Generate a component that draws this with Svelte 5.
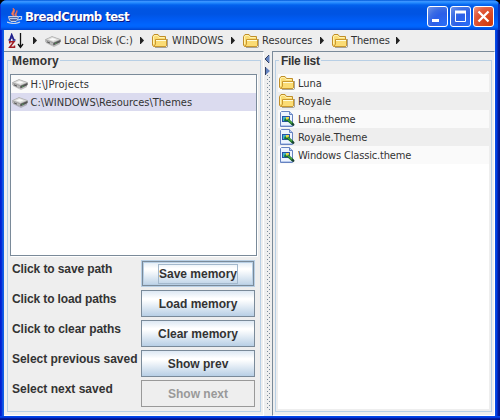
<script>
  const crumbs = [
    { label: 'Local Disk (C:)', kind: 'disk', width: 107, gap: 3, tracking: -0.16 },
    { label: 'WINDOWS', kind: 'folder', width: 91, gap: 4, tracking: 0 },
    { label: 'Resources', kind: 'folder', width: 89, gap: 3, tracking: 0 },
    { label: 'Themes', kind: 'folder', width: 76, gap: 3, tracking: -0.1 }
  ];
  const memory = [
    { path: 'H:\\JProjects', tracking: 0.22 },
    { path: 'C:\\WINDOWS\\Resources\\Themes', tracking: 0 }
  ];
  const files = [
    { name: 'Luna', kind: 'folder', tracking: 0 },
    { name: 'Royale', kind: 'folder', tracking: 0 },
    { name: 'Luna.theme', kind: 'theme', tracking: -0.15 },
    { name: 'Royale.Theme', kind: 'theme', tracking: -0.1 },
    { name: 'Windows Classic.theme', kind: 'theme', tracking: -0.17 }
  ];
  const actions = [
    { text: 'Click to save path', button: 'Save memory', focused: true, tracking: -0.1 },
    { text: 'Click to load paths', button: 'Load memory', tracking: -0.12 },
    { text: 'Click to clear paths', button: 'Clear memory', tracking: -0.06 },
    { text: 'Select previous saved', button: 'Show prev', tracking: -0.03 },
    { text: 'Select next saved', button: 'Show next', disabled: true, tracking: 0 }
  ];
</script>

{#snippet icon(kind)}
  <svg class="icon" width="16" height="16" viewBox="0 0 16 16">
    {#if kind === 'folder'}
      <path d="M3 14.5H14.5Q15.5 14.5 15.5 13V6" fill="none" stroke="#8f8a78" opacity=".75" />
      <path d="M.5 12V3.5L2 1.5H6L7.5 3.5H13.5V6L14.5 6.5V12.5L13.5 13.5H1.5Z" fill="#fbdc74" stroke="#c08e2a" />
      <path d="M1.5 4L2.5 2.5H5.5L7 4.5H12.5M1.5 4V11" fill="none" stroke="#fff3b0" />
      <path d="M3.5 6.5H14.5V12.5L13.5 13.5H2L3.5 11Z" fill="url(#folderFace)" stroke="#c9982f" />
      <path d="M4 7.5H14" stroke="#fffcdc" />
    {:else if kind === 'disk'}
      <path d="M1 8L8 12.5L15 9V11L9 14L1 10Z" fill="#777" opacity=".45" />
      <path d="M.5 6.5L7 3.5L15.5 6.5V9L8.5 12.5L.5 9Z" fill="#8d8d8d" />
      <path d="M.5 6.5L7 3.5L15.5 6.5L8.5 9.5Z" fill="#dededc" stroke="#aaa" stroke-width=".6" />
      <path d="M4 6.5L7.5 5L11.5 6.3L8.2 7.8Z" fill="#fafafa" />
      <path d="M.5 7L8 10V12L.5 9Z" fill="#bababa" />
      <path d="M8.5 10L15.5 7V9L8.5 12.2Z" fill="#555" />
      <path d="M2 8.8L5 10.1" stroke="#555" />
      <path d="M10 10.3H11.5" stroke="#4f9e55" />
    {:else}
      <path d="M2.5 .5H10.5L13.5 3.5V15.5H1.5V1.5Z" fill="#edf4ff" stroke="#6683c1" />
      <path d="M10.5 .5V3.5H13.5" fill="#b9cdf2" stroke="#6683c1" />
      <path d="M2 14.5H13" stroke="#b6c9ed" />
      <rect x="3" y="5" width="8" height="6" fill="#2853a5" />
      <rect x="4" y="6" width="3" height="4" fill="#42b8ce" />
      <rect x="7" y="6" width="3" height="3" fill="#f0d84d" />
      <path d="M6 7L8.5 9.5L6.5 10.5L5 9.5Z" fill="#187431" />
      <path d="M8.5 8.5L14 13.5" stroke="#18742a" stroke-width="2.6" />
      <path d="M8.5 8.2L13 12.3" stroke="#69bc46" />
      <path d="M13 12.5L15 14.5" stroke="#183f32" stroke-width="2" />
    {/if}
  </svg>
{/snippet}

{#snippet arrow()}
  <svg class="arrow" width="4" height="7" viewBox="0 0 4 7"><path d="M0 0H.8L4 3.5L.8 7H0Z" fill="#222" /></svg>
{/snippet}

<div class="window">
  <svg class="defs" width="0" height="0"><defs>
    <linearGradient id="folderFace" x2="1" y2="1"><stop stop-color="#fff8bd" /><stop offset="1" stop-color="#f6cd55" /></linearGradient>
  </defs></svg>
  <header>
    <svg class="java" width="16" height="16" viewBox="0 0 16 16">
      <path d="M6.5 8C2 5 7.5 4 6 0C10 3 5 4.5 7 8M8.5 8C6.5 6 9.5 5 10 2.5C10.5 5 8.5 6 9.5 8" fill="#f58a68" stroke="#f06b4c" stroke-width=".8" />
      <path d="M1.5 8.5H11.5L10.5 12L9 13.5H4L2.5 12Z" fill="#5069a5" stroke="#c6d4eb" />
      <path d="M12 8.5H14.5V11L11 12M0 14Q7 17 13 14" fill="none" stroke="#c6d4eb" stroke-width="1.2" />
      <path d="M3 10.5H10" stroke="#b9c8e6" />
    </svg>
    <h1>BreadCrumb test</h1>
    <div class="controls">
      <span class="ctl"><svg width="21" height="21"><path d="M5 14.5H12" stroke="#fff" stroke-width="3" /></svg></span>
      <span class="ctl"><svg width="21" height="21"><path d="M5.5 5V15.5H15.5V5" fill="none" stroke="#fff" /><path d="M5 6H16" stroke="#fff" stroke-width="3" /></svg></span>
      <span class="ctl close"><svg width="21" height="21"><path d="M5.5 5.5L15.5 15.5M15.5 5.5L5.5 15.5" stroke="#fff" stroke-width="2.3" /></svg></span>
    </div>
  </header>

  <main>
    <nav>
      <svg class="sort" width="16" height="16" viewBox="0 0 16 16">
        <path d="M12.5 0V14M10 11L12.5 14.5L15 11" stroke="#111" fill="none" stroke-width="1.3" />
        <path d="M.5 6.9H3M4.5 6.9H7.5M1.7 7L3.7 1.5L6 7M2.5 5H5.5" fill="none" stroke="#20208c" stroke-width="1.5" />
        <path d="M1.7 10.5V8.8H6L1.7 14.3H6.5V12.5" fill="none" stroke="#a01c24" stroke-width="1.5" />
      </svg>
      {@render arrow()}
      {#each crumbs as c}
        <span class="crumb" style:width="{c.width}px">
          {@render icon(c.kind)}<span style:margin-left="{c.gap}px" style:letter-spacing="{c.tracking}px">{c.label}</span>{@render arrow()}
        </span>
      {/each}
    </nav>

    <div class="split">
      <section class="pane left">
        <div class="group">
          <h2>Memory</h2>
          <div class="list memory">
            {#each memory as m, i}
              <div class="row" class:selected={i === 1}>{@render icon('disk')}<span class="tx" style:letter-spacing="{m.tracking}px">{m.path}</span></div>
            {/each}
          </div>
          <div class="actions">
            {#each actions as a}
              <div class="action">
                <span style:letter-spacing="{a.tracking}px">{a.text}</span>
                <button class:focused={a.focused} disabled={a.disabled}><span>{a.button}</span></button>
              </div>
            {/each}
          </div>
        </div>
      </section>

      <div class="divider">
        <svg width="7" height="24" viewBox="0 0 7 24">
          <path d="M5.5 4V12L1 8Z" fill="#6382bf" /><path d="M5 4L1 8L5 12" fill="none" stroke="#333f5f" />
          <path d="M1.5 16V24L6 20Z" fill="#6382bf" /><path d="M1.5 16V24" stroke="#333f5f" />
        </svg>
        <svg class="dots" width="4" height="336">
          <defs><pattern id="grip" width="4" height="4" patternUnits="userSpaceOnUse">
            <rect width="1" height="1" fill="#7a8a99" /><rect x="2" y="2" width="1" height="1" fill="#7a8a99" />
          </pattern></defs>
          <rect width="4" height="336" fill="url(#grip)" />
        </svg>
      </div>

      <section class="pane right">
        <div class="group">
          <h2 class="tight">File list</h2>
          <div class="list files">
            {#each files as f}
              <div class="row">{@render icon(f.kind)}<span class="tx" style:letter-spacing="{f.tracking}px">{f.name}</span></div>
            {/each}
          </div>
        </div>
      </section>
    </div>
  </main>
</div>

<style>
  :global(body) { background: #000; }
  * { box-sizing: border-box; }
  .window {
    width: 500px; height: 420px; display: flex; flex-direction: column;
    border-radius: 7px 7px 0 0; padding: 0 5px 4px 4px; overflow: hidden;
    background: linear-gradient(90deg, #0019cf 0, #0831d9 2px, #166aee 3px, #0855dd 4px, #0855dd 495px, #0141e8 496px, #0138dd 497px, #001ea0 498px, #00138c 500px);
    box-shadow: inset 0 -1px #00138c, inset 0 -2px #001ea0, inset 0 -3px #0138dd, inset 0 -4px #0046e8;
  }
  .defs { display: none; }
  header {
    height: 30px; flex: none; margin: 0 -5px 0 -4px; padding: 0 6px 0 7px;
    display: flex; align-items: center;
    background: linear-gradient(#0058d8 0, #3a93ff 1.5px, #288eff 2.5px, #0262ee 5px, #0055e3 9px, #0054e3 14px, #005cf5 20px, #0066ff 25px, #0063fa 27px, #0044d0 30px);
    box-shadow: inset 1px 0 #0831d9, inset -2px 0 #0430b8;
  }
  .java { margin-top: 2px; }
  h1 { margin: 4px 0 0 2px; font: bold 13px/18px "DejaVu Sans Condensed", "DejaVu Sans", sans-serif; letter-spacing: -.55px; color: #fff; text-shadow: 1px 1px #0a1883; white-space: nowrap; }
  .controls { display: flex; gap: 2px; margin: 3px 0 0 auto; }
  .ctl { width: 21px; height: 21px; border: 1px solid #fff; border-radius: 3px; background: radial-gradient(circle at 85% 90%, #2a6cf5, #2c5fe8 45%, #3a6ce4 65%, #7295e8); }
  .ctl svg { display: block; margin: -1px; }
  .close { background: radial-gradient(circle at 85% 90%, #d33b0c, #dc4d28 50%, #e25d40 70%, #f09b86); }
  main { flex: 1; min-height: 0; display: flex; flex-direction: column; background: #eee; color: #333; font: 11px/18px "DejaVu Sans Condensed", "DejaVu Sans", sans-serif; }
  nav { height: 21px; flex: none; display: flex; align-items: center; padding-left: 4px; white-space: nowrap; }
  .sort { flex: none; margin-right: 9px; }
  .arrow { flex: none; }
  .crumb { display: flex; align-items: center; padding-left: 8px; flex: none; }
  .crumb .arrow { margin-left: auto; }
  .icon { flex: none; }
  .split { flex: 1; min-height: 0; display: flex; }
  .pane { border-top: 1px solid #7a8a99; padding: 8px 3px 3px; border-bottom: 1px solid #fff; }
  .left { width: 260px; border-right: 1px solid #fff; padding-right: 2px; }
  .right { flex: 1; border-left: 1px solid #7a8a99; border-right: 1px solid #fff; padding: 8px 2px 3px; }
  .group { height: 100%; border: 1px solid #b8cfe5; padding: 0 2px 2px; display: flex; flex-direction: column; }
  h2 { margin: -9px 0 4px 1px; height: 18px; padding: 0 1px; align-self: flex-start; background: #eee; font: bold 12px/18px "Liberation Sans", Arial, sans-serif; letter-spacing: .15px; }
  .tight { letter-spacing: -.3px; padding-left: 2px; }
  .memory { height: 182px; width: 247px; flex: none; border: 1px solid #7a8a99; background: #fff; box-shadow: 1px 1px #fff; }
  .row { height: 18px; display: flex; align-items: center; padding-left: 1px; background: #fafafa; white-space: nowrap; }
  .row .tx { margin-left: 3px; padding-top: 2px; }
  .memory .tx { margin-left: 2.5px; }
  .selected { background: #dbdbef; }
  .files { flex: 1; background: #fff; }
  .files .row:nth-child(even) { background: #eee; }
  .actions { display: flex; flex-direction: column; gap: 3px; padding-top: 4px; }
  .action { display: flex; justify-content: space-between; padding: 0 3px 0 2px; height: 27px; font: bold 12px/18px "Liberation Sans", Arial, sans-serif; white-space: nowrap; }
  button { width: 114px; height: 27px; padding: 0; font: inherit; color: #333; border: 1px solid #7a8a99; border-radius: 0; background: linear-gradient(#dde8f3, #fff 30%, #fff 35%, #b8cfe5); }
  button:disabled { background: #eee; border-color: #999; color: #999; }
  .focused { border-color: #b8cfe5; box-shadow: inset 0 0 0 1px #7a8a99, inset 0 0 0 2px #b8cfe5; }
  .focused span { display: inline-block; outline: 1px solid #a3b8cc; }
  .divider { width: 8px; display: flex; flex-direction: column; }
  .dots { margin-left: 3px; }
</style>
